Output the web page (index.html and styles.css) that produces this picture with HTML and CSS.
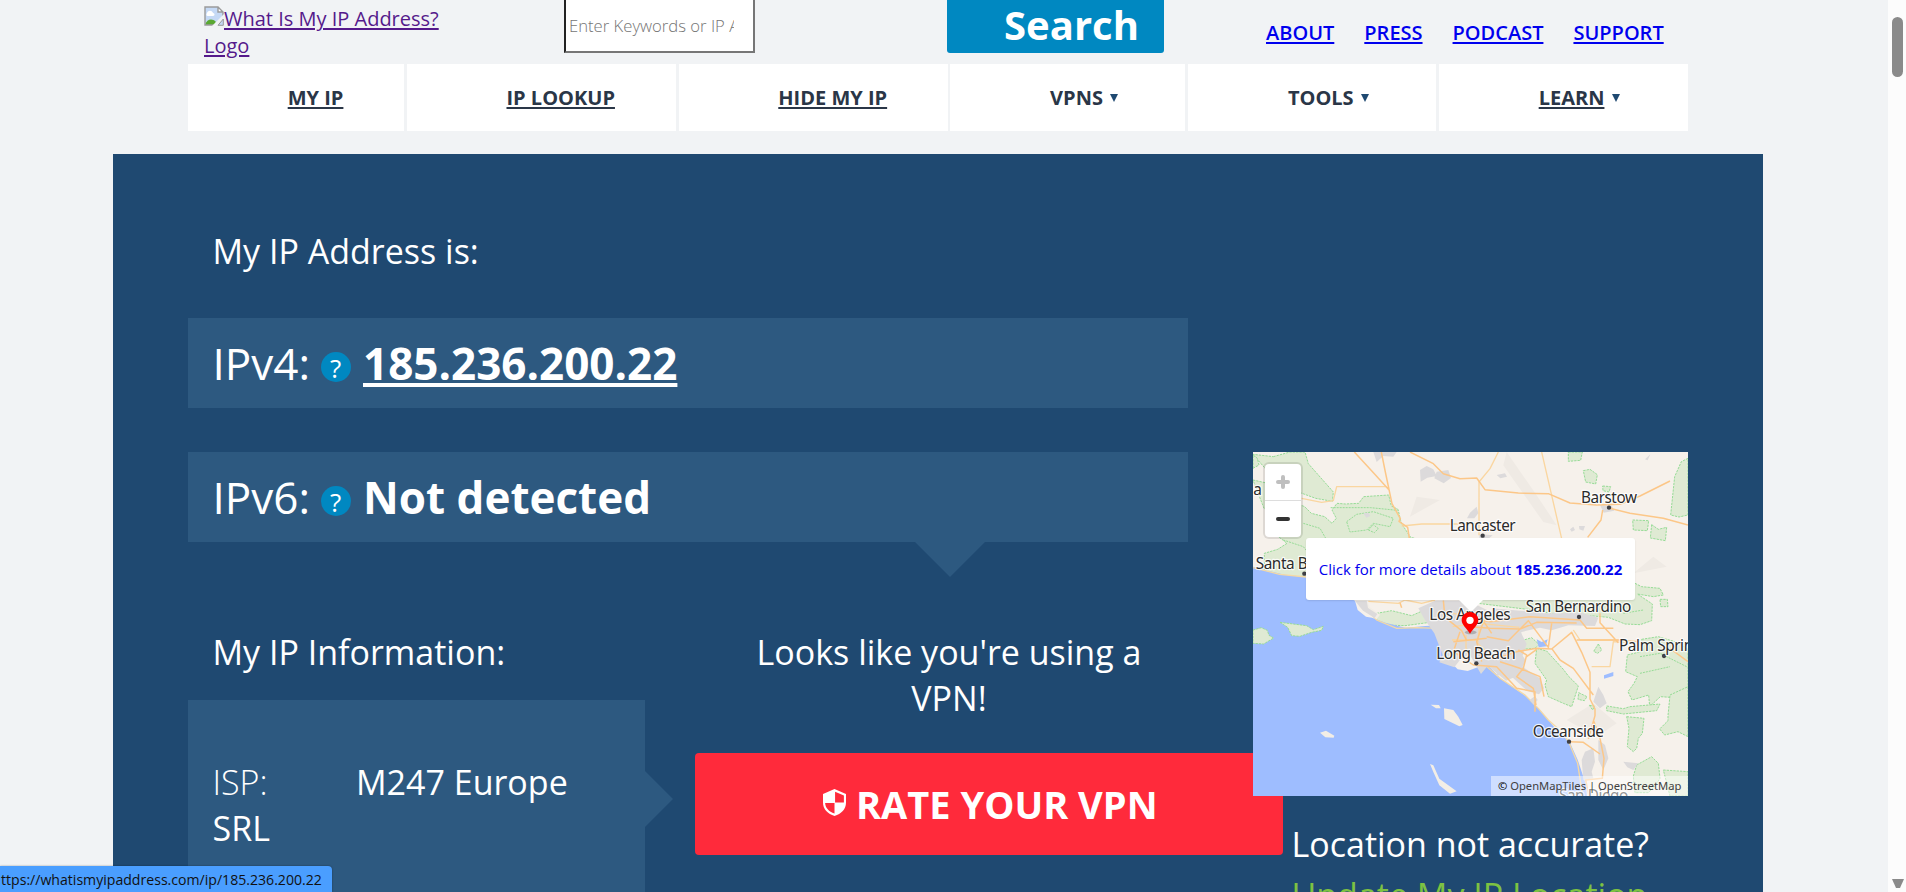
FILE: index.html
```html
<!DOCTYPE html>
<html lang="en">
<head>
<meta charset="utf-8">
<title>What Is My IP Address</title>
<link rel="stylesheet" href="styles.css">
</head>
<body>
<div class="window">
  <main class="page">
    <header class="top">
      <a class="logo" href="#"><svg class="broken" viewBox="0 0 20 20"><path d="M1 1h13l5 5v4l-9 9H1z" fill="#c5d9f5"/><path d="M3 7c1-3 5-3 6 0 2 0 2 3 0 3H4C2 10 2 8 3 7z" fill="#fff"/><path d="M1 19c2-6 7-7 11-3l-2 3z" fill="#5aa832"/><path d="M14 1v5h5z" fill="#fff"/><path d="M19 10V6l-5-5H1v18h10M14 1v5h5" fill="none" stroke="#9a9a9a" stroke-width="1.4"/><path d="M20 8v3l-9 9H8z" fill="#f1f3f5"/><path d="M19.3 13v6.3H14z" fill="#c5d9f5" stroke="#9a9a9a"/></svg>What Is My IP Address? Logo</a>
      <div class="field"><span>Enter Keywords or IP Address</span></div>
      <button class="search">Search</button>
      <nav class="links"><a href="#">ABOUT</a><a href="#">PRESS</a><a href="#">PODCAST</a><a href="#">SUPPORT</a></nav>
    </header>
    <nav class="menu">
      <div class="cell"><a href="#">MY IP</a></div>
      <div class="cell"><a href="#">IP LOOKUP</a></div>
      <div class="cell"><a href="#">HIDE MY IP</a></div>
      <div class="cell"><span>VPNS</span><i class="caret"></i></div>
      <div class="cell"><span>TOOLS</span><i class="caret"></i></div>
      <div class="cell"><a href="#">LEARN</a><i class="caret"></i></div>
    </nav>
    <section class="hero">
      <div class="main">
        <h2 class="heading">My IP Address is:</h2>
        <div class="ip"><span class="ver">IPv4:</span><span class="help">?</span><a class="addr" href="#">185.236.200.22</a></div>
        <div class="ip pointed"><span class="ver">IPv6:</span><span class="help">?</span><span class="addr">Not detected</span></div>
        <div class="details">
          <div class="info">
            <h2 class="heading">My IP Information:</h2>
            <div class="info-box"><span class="key">ISP:</span>M247 Europe SRL</div>
          </div>
          <div class="vpn">
            <p class="notice">Looks like you're using a VPN!</p>
            <button class="rate"><svg class="shield" viewBox="0 0 24 28"><path d="M12 0 24 5v9c0 7-5 12-12 14C5 26 0 21 0 14V5z" fill="#fff"/><path d="M12.6 2.800 21.800 6.800V14h-9.200zM2.200 14.500H12V25.500C6 23.500 2.500 19.500 2.200 14.500z" fill="#ff2a3b"/></svg><span>RATE YOUR VPN</span></button>
          </div>
        </div>
      </div>
      <aside class="side">
        <div class="map">
          <svg class="tiles" viewBox="39 36 1305 1032">
            <rect x="39" y="36" width="1305" height="1032" fill="#f6f1eb"/>
            <g fill="#efeae4"><path d="M800 36l90 130 60 90-40-10-120-170zM600 180l-90 50 20-60zM1240 350l-60 50 100-20zM980 840l80-50 70 60-60 40z"/></g>
            <g class="park">
              <path d="M100 50l50-14h45l10 35 75 85-3 28-50-9-60-22-50-20-78-90z"/>
              <path d="M39 85l18-10-5-20-13-10zM39 120l45 10 60 50 50 20 20 20 40 10 22 20 13-15-13-25 15-20 25 2 40-2 15-20 75-5 8 33 20 10 10 42 28 42 40 10 60 22 45 20-95 32-190-2-90 22-25 15-20-5-15 13-38-10-28 16-45-8-38-3V340l40-12 28-18-38-30-12-60-19-15z"/>
              <path d="M985 36h42l-5 25-37 3zM1030 92l20-4 22 16-5 28-30-6zM1088 138l24 2-5 16-18-4zM1344 55l-20 10-20 45-12 115 25 6 27-6zM1178 240l48 2-4 30-42-2zM1235 254l20 14 25-6-4 40-45-8z"/>
              <path d="M1185 430l20 10 55 5 10 20-30 5-48-8 45 30-2 50-35 12-45-2-50-20-55-5 20 15-20 5-65-15-90-20-230-28V455h420zM1260 478h22l2 22h-22z"/>
              <path d="M410 520l45-8 60 15 45-20 35 15-25 25-75 10-60-2-25-15z"/>
              <path d="M835 605l40-12 22 20-12 12-50 4zM890 625l30 8 50 55 15 20 30 30-20 62-25-10-45-20-10-35 5-15-35-50zM1016 758l25 12-8 12-19-4zM1075 612l10 18-12 10-12-6zM1048 796l15 2-5 12z"/>
              <path d="M1205 598l50-8 60 18 29 20v120l-38 25-45-3-32 30-3-35-50 15-12-25 18-25 10-20-35-15 5-50 48-12z"/>
              <path d="M1100 798l50 8 20-6 90-8-10 20-100 10-50-10zM1160 830l52 5-5 45-12 15-5 30-10 10-18-15 5-55zM1290 765l54-25v150l-30-15-40 10-15-18 25-25v-15zM1190 975l45-25 20 20 5 45-15 23-20 20h-40l-5-50zM1270 990l74 5v73h-54z"/>
            </g>
            <path class="inner" d="M272 203h120l80 8M320 245l30-22 50-8 60 20-10 25-50-10-20 20-50 6zM385 270l15-16 15 12-12 12zM190 250l50 15 20 35-10 40M130 300l60 20 20 25M1150 520l60-10M1200 650l60-10 80 40M1200 700l90-20"/>
            <path class="sea" d="M39 380l35 10 60 14 66 8 145 70 8 28 25 20 18 3 40 15 60 15 60-5 45-2 25 22 15 45-8 45 20 20 30 5 40-15 20-2 40 40 25 18 50 35 45 45 50 60 35 30 25 55 25 75 5 60 8 29H39z"/>
            <path class="coast" d="M39 383l80 20 80 8M355 490l35 30 20 20 60 25 60-2 65 2 30 25 10 40M735 675l45 40 75 50 40 40 30 35 45 40 18 30 25 60 15 100"/>
            <path class="park" d="M39 570l25-7 18 8 5 15 14 8-30 18-32-2zM120 547l80 10 20 12 30-10-5 12-30 6-35 12-25-2-12-25z"/>
            <path class="isle" d="M572 794l25 1 5 10-14 0zM612 805l28 5 15 20 13 25-10 4-45-22zM240 878l18-6 25 15-2 6-25-1zM570 972l10 4 18 40 52 38-20 7-32-25-18-40zM345 482h35l10 20 30 22-10 14-50-35z"/>
            <g class="town">
              <path d="M400 36h70l-10 14-30-2-20 18zM540 90l20-12 20 10 10 20-28 5-20 12zM590 95l35-5 8 24-22 16-28-15zM770 105l25-5 6 10-20 5zM690 218l20-18 5 20-12 15h-22zM990 268l10-8 5 10-10 5zM1017 258l18 0-5 14-12-4zM1080 195l35 2 8 15-32 6zM370 220l15-2 6 10-12 5zM1215 58l16-15-8 18zM718 282l40 4-10 8-30 0zM345 482h35l4 22 28 18-8 12-35-22z"/>
              <path d="M585 482h100l60 30 90 20 10 50 15 30-12 35 10 15-25 45-35 15-55-45-20 25-35-60-30 20-15 20-45-15 10-22-25-65-28-40-20-35zM755 505l170 15 100-2 50 15-10 25-80-2-50 15-35-8-65 15-60-15zM770 670l70 5 60 40 12 30-15 18-35-10-60-55-32 10zM885 768l8 12-12 14-12-14zM1075 740l15 25 10 25-20 15-20-20z"/>
              <path d="M1075 900l20 15 10 40-15 35-15-30zM1035 935l25-10 5 40-10 30 5 20-30 5-5-60zM1150 965l45 5-15 20-18-8z"/>
            </g>
            <g class="water"><path d="M890 598l15 8 18-8-5 16 8 4-30 4zM1092 706l28-10v12l-28 8z"/></g>
            <g class="road thin">
              <path d="M185 175l60 12 35-5 10-42h150M485 258l60-6h130l50-2M775 36l-25 50-33 40v160M905 36l30 130 30 130M385 484l90 6 20-10 50 10 40-10M636 600h80M638 560l80-10 120 12M678 585v55M718 560l-5 50 30 30M1055 680h55l10-75 35 2M1000 570l20 30h115M640 520l90 20"/>
            </g>
            <g class="road">
              <path d="M343 36l60 65 45 50M424 36l12 60 20 95 25 45-4 8 26 18 6 40M510 36l70 35 30 30 50 15 50-2 25 35 100 10 90 2 65 28 80 6 70-2 60-25 90-45M1110 205l60 15 100 15 74 20M1088 210l-5 30-40 52"/>
              <path d="M610 482l5 50 50 40 15 30M480 488l5 15M660 530l90 15 120-15 150 10 20 25h80M690 560l60 5 90 2 50-20 120 2M730 545l-20 60 15 60M740 590l65 12 60-60 60 80 10-72M660 575l-20 60 60 40 70 5 60 65 55 10v60M735 655l50-5 45-15 60-10 45 2 60-50 30 60 25 60v80l15 30v20l-20 70M935 625l25 35 40 25 60 80M780 665l60 20 60 25 12 60M835 630l25 15-10 40-20 25 50 35 8 50M640 605l100-10M755 580l-30-45M1060 840l20 55 12 60-5 60-50 5 10 48M990 905l40 2 50 35M1010 600h125l60 5M1080 520v28l55 60M860 650l30-22M1290 625l54 40"/>
            </g>
            <g fill="#3f4045"><circle cx="728" cy="287" r="6.500"/><circle cx="1107" cy="203" r="6.500"/><circle cx="193" cy="401" r="6.500"/><circle cx="1017" cy="531" r="6.500"/><circle cx="709" cy="670" r="6.500"/><circle cx="1272" cy="648" r="6.500"/><circle cx="987" cy="905" r="6.500"/></g>
            <g class="names">
              <text x="40" y="166">a</text><text x="629" y="273" textLength="198">Lancaster</text><text x="1023" y="189" textLength="168">Barstow</text><text class="tight" x="47" y="387">Santa Barbara</text><text x="857" y="517" textLength="317">San Bernardino</text><text x="568" y="539" textLength="244">Los Angeles</text><text x="589" y="656" textLength="238">Long Beach</text><text class="tight" x="1137" y="633">Palm Springs</text><text x="878" y="890" textLength="214">Oceanside</text><text x="957" y="1082" textLength="208">San Diego</text>
            </g>
          </svg>
          <div class="zoom"><svg viewBox="0 0 36 36"><path d="M18 13v10M13 18h10" stroke="#bfbfbf"/></svg><svg viewBox="0 0 36 36"><path d="M13 18h10" stroke="#333"/></svg></div>
          <a class="popup" href="#">Click for more details about&nbsp;<b>185.236.200.22</b></a>
          <svg class="pin" viewBox="0 0 54 70"><ellipse cx="29" cy="63" rx="18" ry="6" fill="#0003"/><path d="M27 2C12 2 2 13 2 27c0 14 15 24 25 40 10-16 25-26 25-40C52 13 42 2 27 2z" fill="red"/><circle cx="27" cy="27" r="11" fill="#fff"/></svg>
          <div class="credit">© <span>OpenMapTiles | OpenStreetMap</span></div>
        </div>
        <p class="locate">Location not accurate?<br><a href="#">Update My IP Location</a></p>
      </aside>
    </section>
  </main>
  <div class="scrollbar"><div class="thumb"></div><svg class="down" viewBox="0 0 12 10"><path d="M0 0h12L8 9H4z" fill="#8a8a8a"/></svg></div>
</div>
<div class="status">ttps://whatismyipaddress.com/ip/185.236.200.22</div>
</body>
</html>
```
FILE: styles.css
```css
* { box-sizing: border-box; }
body { margin: 0; height: 892px; overflow: hidden; background: #f1f3f5; font-family: "Open Sans", sans-serif; }
h2, p { margin: 0; font-weight: 400; }
button { border: 0; padding: 0; font-family: inherit; color: #fff; }
.window { display: flex; height: 892px; overflow: hidden; }
.page { width: 1888px; height: 892px; overflow: hidden; }
.top { display: flex; height: 64px; padding-left: 204px; align-items: flex-start; }
.logo { width: 250px; margin-right: 110px; padding-top: 5px; font-size: 20px; line-height: 27px; color: #551a8b; text-underline-offset: 2px; }
.broken { width: 20px; height: 20px; vertical-align: 0; margin-top: -4px; }
.field { width: 191px; height: 53px; padding: 14px 19px 0 3px; background: #fff; border: 2px solid #767676; border-left-color: #222; border-top: 0; font-size: 16.67px; line-height: 23px; font-weight: 300; color: #757575; }
.field span { display: block; overflow: hidden; white-space: nowrap; }
.search { width: 217px; height: 53px; margin-left: 192px; padding: 0 0 4px 32px; background: #0088c1; border-radius: 0 0 3px 3px; font-size: 40px; line-height: 48px; font-weight: 700; }
.links { display: flex; gap: 30px; margin-left: 102px; padding-top: 19px; font-size: 20px; line-height: 27px; font-weight: 600; }
.links a { color: #00e; text-underline-offset: 2px; }
.menu { display: grid; grid-template-columns: 216px 269px 269px 235px 248px 249px; column-gap: 2.800px; width: 1500px; height: 67px; margin-left: 188px; }
.cell { display: flex; align-items: center; padding-left: 99.700px; background: #fff; font-size: 20px; font-weight: 700; color: #2a3647; white-space: nowrap; }
.cell a { color: inherit; text-underline-offset: 2px; }
.caret { margin-left: 7px; border: 4px solid transparent; border-top: 8px solid #1f4971; border-bottom: 0; }
.cell a + .caret { margin-left: 8px; }
.hero { display: flex; width: 1650px; height: 738px; margin: 23px 0 0 113px; padding-left: 75px; background: #1f4971; color: #fff; overflow: hidden; }
.main { width: 1000px; margin-right: 65px; padding-top: 74px; flex: none; }
.heading { padding-left: 24.500px; font-size: 34px; line-height: 46px; }
.ip { display: flex; align-items: center; height: 90px; margin-top: 44px; padding-left: 24.500px; background: #2d5980; font-size: 44px; line-height: 60px; }
.ver { width: 108px; font-weight: 400; }
.help { width: 30px; height: 30px; margin: 7px 12.500px 0 0; border-radius: 50%; background: #0088c1; font-size: 26px; line-height: 32px; text-align: center; }
.addr { font-weight: 700; color: #fff; text-underline-offset: 3px; text-decoration-thickness: 4px; }
.pointed { position: relative; }
.pointed::after { content: ""; position: absolute; left: 727px; top: 90px; border: 35px solid transparent; border-top-color: #2d5980; border-bottom: 0; }
.details { display: flex; gap: 50px; margin-top: 87px; font-size: 34px; line-height: 46px; }
.info { width: 457px; flex: none; }
.info-box { position: relative; height: 300px; margin-top: 25px; padding: 59px 60px 0 24.500px; background: #2d5980; font-size: 34px; font-weight: 500; }
.info-box::after { content: ""; position: absolute; left: 457px; top: 71px; border: 28px solid transparent; border-left-color: #2d5980; border-right: 0; }
.key { display: inline-block; width: 143.500px; font-weight: 300; }
.vpn { width: 508px; flex: none; }
.notice { width: 420px; margin: 0 auto 32px; text-align: center; }
.rate { display: flex; align-items: center; width: 588px; height: 102px; padding-left: 128px; background: #ff2a3b; border-radius: 4px; font-size: 38px; font-weight: 700; white-space: nowrap; }
.shield { width: 23px; height: 27px; margin: 0 10px 4px 0; }
.side { width: 435px; padding-top: 298px; z-index: 1; }
.map { position: relative; width: 435px; height: 344px; overflow: hidden; }
.tiles { display: block; width: 435px; height: 344px; }
.park { fill: #dfead3; stroke: #97dc97; stroke-width: 3; stroke-dasharray: 7 3; }
.inner { fill: none; stroke: #97dc97; stroke-width: 3; stroke-dasharray: 6 3; }
.sea, .water { fill: #9ebdff; }
.isle { fill: #f3eee6; }
.town { fill: #dcdadb; }
.coast { fill: none; stroke: #f5d9a4; stroke-width: 4; }
.road { fill: none; stroke: #fcc788; stroke-width: 4.500; stroke-linejoin: round; }
.thin { stroke: #fad6a0; stroke-width: 4; }
.names { font: 46px "Noto Sans", sans-serif; fill: #2b2b2b; stroke: #ffffffd0; stroke-width: 7; paint-order: stroke; stroke-linejoin: round; }
.tight { letter-spacing: -1.200px; }
.zoom { position: absolute; left: 12px; top: 12px; width: 36px; height: 73px; background: #fff; border-radius: 4px; box-shadow: 0 0 0 2px #0000001a; }
.zoom svg { display: block; width: 36px; height: 36px; fill: none; stroke-width: 4; stroke-linecap: round; }
.zoom svg + svg { height: 37px; border-top: 1px solid #ddd; }
.popup { position: absolute; left: 53px; top: 86px; width: 329px; height: 62px; display: flex; align-items: center; justify-content: center; background: #fff; border-radius: 3px; box-shadow: 0 1px 2px #0000001a; font-size: 15px; color: #00e; text-decoration: none; white-space: nowrap; }
.popup::after { content: ""; position: absolute; left: 153px; top: 62px; border: 12px solid transparent; border-top-color: #fff; border-bottom: 0; }
.pin { position: absolute; left: 208px; top: 159px; width: 18px; height: 24px; }
.credit { position: absolute; right: 0; bottom: 0; width: 197px; height: 20px; padding-left: 7px; background: #ffffff80; font: 11.200px/20px "Noto Sans", sans-serif; color: #000; white-space: nowrap; }
.credit span { color: #404040; }
.locate { margin: 23px 0 0 38.500px; font-size: 34px; line-height: 51px; white-space: nowrap; }
.locate a { color: #7dc242; text-decoration: none; }
.scrollbar { display: flex; flex-direction: column; align-items: center; justify-content: space-between; width: 18px; padding: 17px 0 3px 1px; background: #fcfcfc; }
.thumb { width: 11px; height: 60px; border-radius: 6px; background: #8a8a8a; }
.down { width: 12px; height: 10px; }
.status { position: absolute; left: 0; bottom: 0; width: 332px; height: 26px; padding-left: 1px; background: #4a9eff; border-radius: 0 4px 0 0; box-shadow: 0 0 2px #0006; font-size: 14.100px; line-height: 27px; color: #111; white-space: nowrap; }
```
